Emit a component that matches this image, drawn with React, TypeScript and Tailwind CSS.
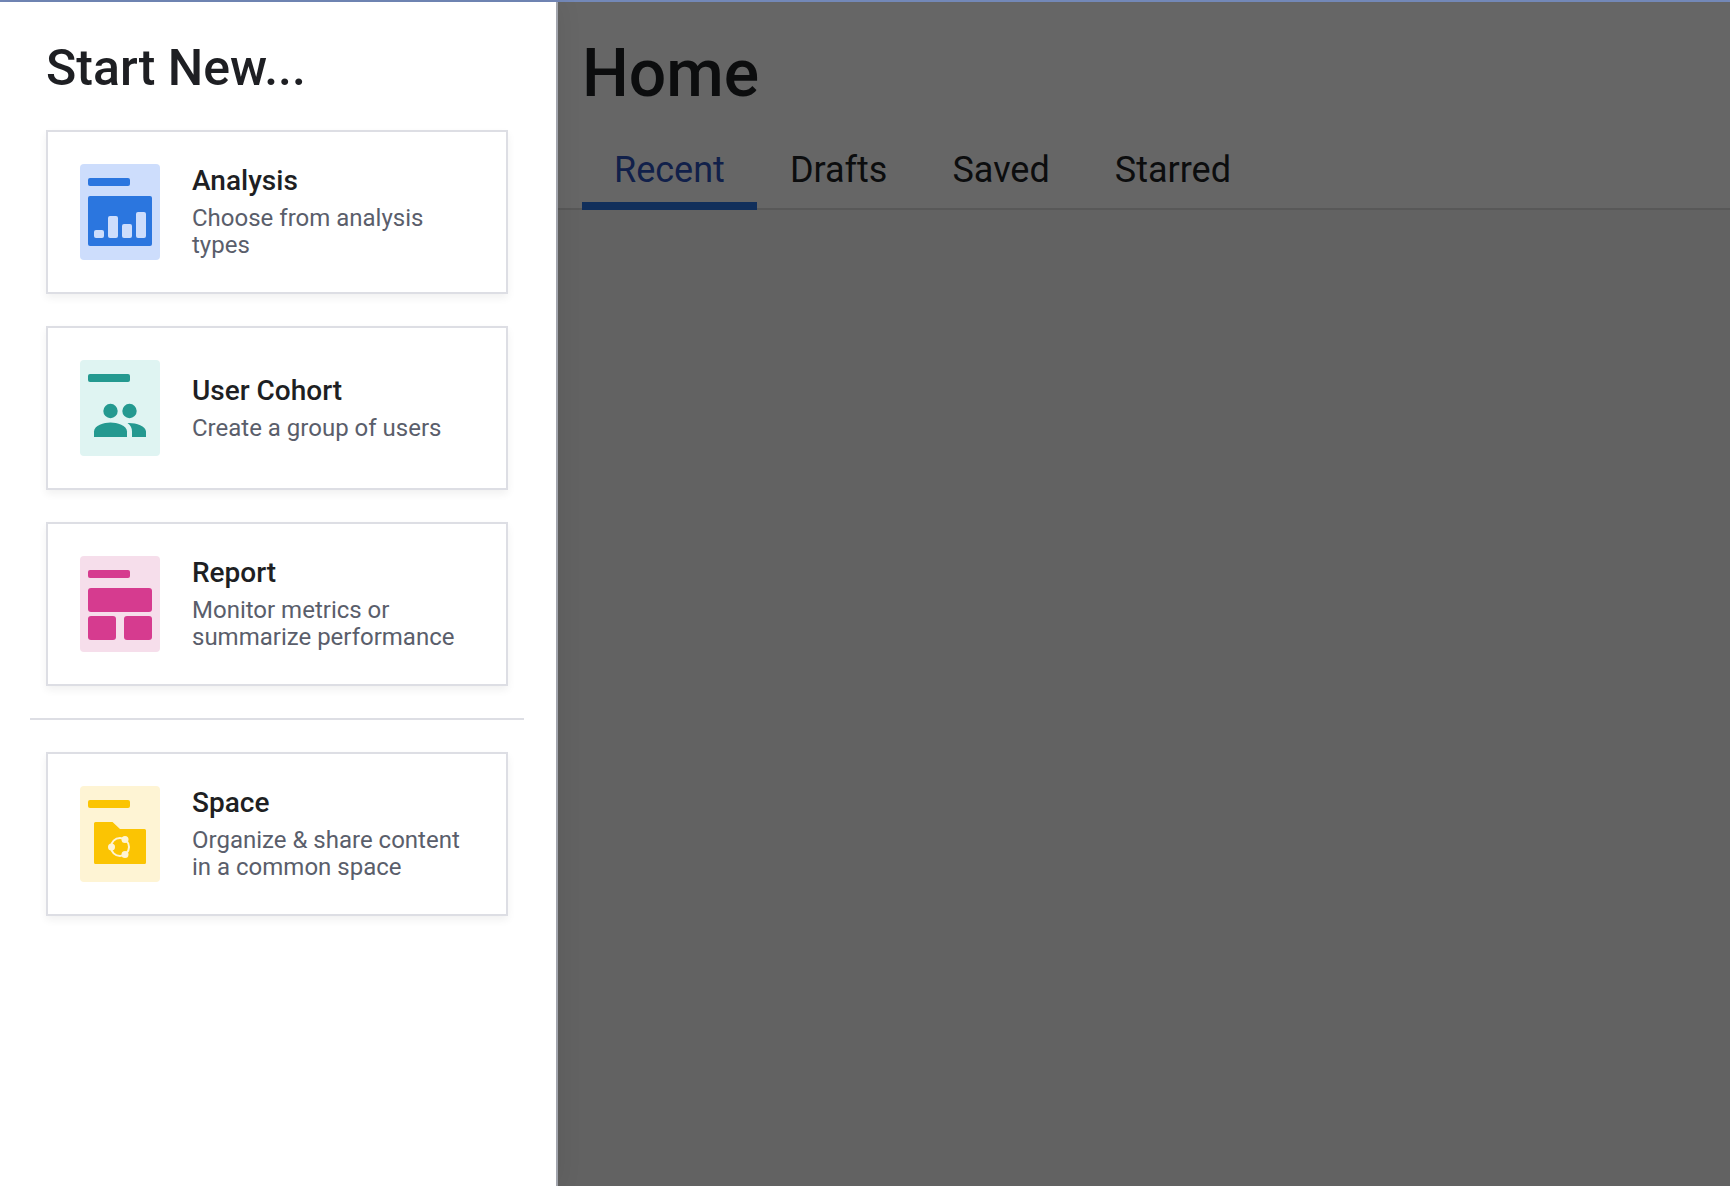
import type { ReactNode } from "react";

function DocIcon({ bg, fg, children }: { bg: string; fg: string; children: ReactNode }) {
  return (
    <svg width="80" height="96" viewBox="0 0 80 96" className="shrink-0" aria-hidden="true">
      <rect width="80" height="96" rx="4" fill={bg} />
      <rect x="8" y="14" width="42" height="8" rx="2" fill={fg} />
      {children}
    </svg>
  );
}

const analysisIcon = (
  <DocIcon bg="#cdddfc" fg="#2b76df">
    <rect x="8" y="32" width="64" height="50" rx="2" fill="#2b76df" />
    <g fill="#cdddfc">
      <rect x="14" y="66" width="10" height="8" rx="2" />
      <rect x="28" y="52" width="10" height="22" rx="2" />
      <rect x="42" y="60" width="10" height="14" rx="2" />
      <rect x="56" y="48" width="10" height="26" rx="2" />
    </g>
  </DocIcon>
);

const cohortIcon = (
  <DocIcon bg="#dff4f2" fg="#249990">
    <g fill="#249990">
      <circle cx="30.5" cy="51" r="7.2" />
      <circle cx="49.5" cy="51" r="7.2" />
      <path d="M14 77V71.500C14 65.500 24 62.500 30.500 62.500S47 65.500 47 71.500V77Z" />
      <path d="M47.500 63C55 62.500 66 66 66 71.500V77H52V71.500C52 68 50.500 65 47.500 63Z" />
    </g>
  </DocIcon>
);

const reportIcon = (
  <DocIcon bg="#f6deeb" fg="#d63b8f">
    <g fill="#d63b8f">
      <rect x="8" y="32" width="64" height="24" rx="3" />
      <rect x="8" y="60" width="28" height="24" rx="3" />
      <rect x="44" y="60" width="28" height="24" rx="3" />
    </g>
  </DocIcon>
);

const spaceIcon = (
  <DocIcon bg="#fef4d4" fg="#fbc403">
    <path
      d="M15.500 36H32.500L40 43H64.500Q66 43 66 44.500V76.500Q66 78 64.500 78H15.500Q14 78 14 76.500V37.500Q14 36 15.500 36Z"
      fill="#fbc403"
    />
    <circle cx="40" cy="61" r="9" fill="none" stroke="#fef4d4" strokeWidth="2" />
    <g fill="#fef4d4">
      <circle cx="31.500" cy="61" r="3.500" />
      <circle cx="45" cy="53.500" r="3.500" />
      <circle cx="45" cy="68.500" r="3.500" />
    </g>
  </DocIcon>
);

function Card({ icon, title, text }: { icon: ReactNode; title: string; text: string }) {
  return (
    <button
      type="button"
      className="flex w-full items-center gap-8 border-2 border-[#dddee4] bg-white p-8 text-left shadow-[0_4px_8px_rgba(0,0,0,0.06)]"
    >
      {icon}
      <span className="flex min-w-0 flex-col gap-2">
        <span className="text-[28px] leading-8 font-medium text-[#1e1f23]">{title}</span>
        <span className="text-[24px] leading-[27px] text-[#5a5e6b]">{text}</span>
      </span>
    </button>
  );
}

const tabs = ["Recent", "Drafts", "Saved", "Starred"];

export default function App() {
  return (
    <div className="flex min-h-screen flex-col border-t-2 border-[#7388b8] bg-[#626262] font-['Roboto',sans-serif]">
      <div className="flex grow">
        <aside className="relative z-10 w-[558px] shrink-0 border-r-2 border-[#a2a5ad] bg-white pt-9 pr-12 pl-[46px] shadow-[0_0_24px_rgba(0,0,0,0.08)]">
          <h2 className="text-[50px] leading-[60px] font-medium text-[#1e1f23]">Start New...</h2>
          <div className="mt-8 flex flex-col gap-8">
            <Card icon={analysisIcon} title="Analysis" text="Choose from analysis types" />
            <Card icon={cohortIcon} title="User Cohort" text="Create a group of users" />
            <Card icon={reportIcon} title="Report" text="Monitor metrics or summarize performance" />
            <hr className="-mx-4 border-t-2 border-[#dddee4]" />
            <Card icon={spaceIcon} title="Space" text="Organize & share content in a common space" />
          </div>
        </aside>
        <main className="min-w-0 grow">
          <header className="border-b-2 border-[#585858] bg-[#666666] pt-8 pl-6">
            <h1 className="text-[66px] leading-[80px] font-medium text-[#0c0d0e]">Home</h1>
            <div role="tablist" className="mt-4 -mb-0.5 flex gap-px">
              {tabs.map((tab, i) => (
                <button
                  key={tab}
                  type="button"
                  role="tab"
                  aria-selected={i === 0}
                  className={
                    i === 0
                      ? "border-b-8 border-[#112f5b] px-8 pt-4 pb-2 text-[36px] leading-[48px] text-[#11204a]"
                      : "border-b-8 border-transparent px-8 pt-4 pb-2 text-[36px] leading-[48px] text-[#0c0d0e]"
                  }
                >
                  {tab}
                </button>
              ))}
            </div>
          </header>
        </main>
      </div>
    </div>
  );
}
